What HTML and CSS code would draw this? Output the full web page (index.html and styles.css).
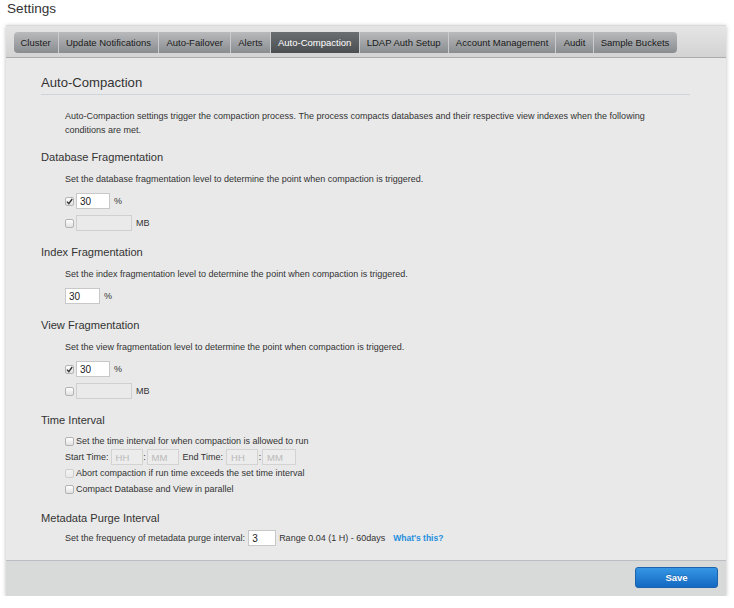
FILE: index.html
```html
<!DOCTYPE html>
<html>
<head>
<meta charset="utf-8">
<link rel="stylesheet" href="styles.css">
</head>
<body>
<h1 class="title">Settings</h1>
<div class="panel">
  <div class="tabbar">
    <div class="tabs">
      <span class="tab">Cluster</span>
      <span class="tab">Update Notifications</span>
      <span class="tab">Auto-Failover</span>
      <span class="tab">Alerts</span>
      <span class="tab active">Auto-Compaction</span>
      <span class="tab">LDAP Auth Setup</span>
      <span class="tab">Account Management</span>
      <span class="tab">Audit</span>
      <span class="tab">Sample Buckets</span>
    </div>
  </div>
  <div class="content">
    <h2 class="main-heading">Auto-Compaction</h2>
    <p class="intro">Auto-Compaction settings trigger the compaction process. The process compacts databases and their respective view indexes when the following conditions are met.</p>

    <div class="section first">
      <h3 class="sec-heading">Database Fragmentation</h3>
      <p class="desc">Set the database fragmentation level to determine the point when compaction is triggered.</p>
      <div class="row"><span class="cb checked"><svg viewBox="0 0 9 9" width="9" height="9"><path d="M2 4.6 L3.8 6.6 L7.2 2" fill="none" stroke="#333" stroke-width="1.4"/></svg></span><span class="field w34">30</span><span class="unit">%</span></div>
      <div class="row gap"><span class="cb"></span><span class="field w56 disabled"></span><span class="unit">MB</span></div>
    </div>

    <div class="section">
      <h3 class="sec-heading">Index Fragmentation</h3>
      <p class="desc">Set the index fragmentation level to determine the point when compaction is triggered.</p>
      <div class="row"><span class="field w35">30</span><span class="unit">%</span></div>
    </div>

    <div class="section">
      <h3 class="sec-heading">View Fragmentation</h3>
      <p class="desc">Set the view fragmentation level to determine the point when compaction is triggered.</p>
      <div class="row"><span class="cb checked"><svg viewBox="0 0 9 9" width="9" height="9"><path d="M2 4.6 L3.8 6.6 L7.2 2" fill="none" stroke="#333" stroke-width="1.4"/></svg></span><span class="field w34">30</span><span class="unit">%</span></div>
      <div class="row gap"><span class="cb"></span><span class="field w56 disabled"></span><span class="unit">MB</span></div>
    </div>

    <div class="section">
      <h3 class="sec-heading">Time Interval</h3>
      <div class="trows">
        <div class="trow"><span class="cb"></span><span class="label">Set the time interval for when compaction is allowed to run</span></div>
        <div class="trow">
          <span class="tlabel">Start Time:</span><span class="field tf">HH</span><span class="colon">:</span><span class="field tf">MM</span>
          <span class="tlabel end">End Time:</span><span class="field tf">HH</span><span class="colon">:</span><span class="field tf wide">MM</span>
        </div>
        <div class="trow"><span class="cb dis"></span><span class="label">Abort compaction if run time exceeds the set time interval</span></div>
        <div class="trow"><span class="cb"></span><span class="label">Compact Database and View in parallel</span></div>
      </div>
    </div>

    <div class="section">
      <h3 class="sec-heading">Metadata Purge Interval</h3>
      <div class="row meta"><span class="mlabel">Set the frequency of metadata purge interval:</span><span class="field w28">3</span><span class="range">Range 0.04 (1 H) - 60days</span><a class="help">What's this?</a></div>
    </div>
  </div>
  <div class="footer">
    <button class="save">Save</button>
  </div>
</div>
</body>
</html>
```
FILE: styles.css
```css
* { box-sizing: border-box; }
html, body { margin: 0; padding: 0; background: #ffffff; }
body {
  font-family: "Liberation Sans", Arial, Helvetica, sans-serif;
  color: #333;
}
.title {
  margin: 0;
  padding: 0 0 0 7px;
  font-size: 13.6px;
  font-weight: normal;
  line-height: 18px;
  color: #333;
}
.panel {
  margin: 7px 0 0 6px;
  width: 720px;
  background: #e9e9e9;
  box-shadow: 0 1px 4px rgba(0,0,0,0.28);
}
.tabbar {
  border-top: 1px solid #d9d9d9;
  border-bottom: 1px solid #a9abad;
  background: linear-gradient(#e5e5e5, #d3d3d3);
  padding: 6px 0 4px 8px;
}
.tabs {
  display: flex;
  height: 21px;
}
.tab {
  display: flex;
  align-items: center;
  padding: 0 7.2px;
  font-size: 9.5px;
  color: #1a1a1a;
  background: linear-gradient(#b8babc, #8a8d90);
  border-left: 1px solid #c9cbcd;
}
.tab:first-child { border-left: none; border-radius: 4px 0 0 4px; padding-left: 6.5px; }
.tab:last-child { border-radius: 0 4px 4px 0; }
.tab.active {
  background: linear-gradient(#6c6f72, #4b4e51);
  color: #fff;
}
.content {
  padding: 16px 36px 14px 35px;
}
.main-heading {
  margin: 0;
  font-size: 13.1px;
  font-weight: normal;
  line-height: 18px;
  padding-bottom: 2px;
  border-bottom: 1px solid #cdd4db;
  color: #333;
}
.intro {
  margin: 14px 25px 0 24px;
  font-size: 9px;
  line-height: 14px;
  color: #333;
}
.section { margin-top: 13px; }
.section.first { margin-top: 12px; }
.sec-heading {
  margin: 0;
  font-size: 11.1px;
  font-weight: normal;
  line-height: 16px;
  color: #333;
}
.desc {
  margin: 7px 0 0 24px;
  font-size: 9px;
  line-height: 14px;
}
.row {
  display: flex;
  align-items: center;
  height: 16px;
  margin: 7px 0 0 24px;
  font-size: 9px;
}
.row.gap { margin-top: 6px; }
.row.meta { margin-top: 4px; }
.cb {
  display: inline-block;
  width: 9px;
  height: 9px;
  border: 1px solid #b3b3b3;
  border-radius: 2px;
  background: linear-gradient(#ffffff, #e2e2e2);
  flex: none;
  position: relative;
}
.cb svg { position: absolute; left: -1px; top: -1px; }
.cb.dis { border-color: #cfcfcf; background: linear-gradient(#f4f4f4, #e8e8e8); }
.field {
  display: inline-flex;
  align-items: center;
  height: 16px;
  border: 1px solid #c8c8c8;
  background: #fff;
  font-size: 10px;
  color: #222;
  padding: 0 3px;
  flex: none;
}
.w34 { width: 34px; margin-left: 2px; }
.w56 { width: 56px; margin-left: 2px; }
.w35 { width: 35px; }
.w28 { width: 28px; margin-left: 3px; }
.field.disabled { background: #eaeaea; border-color: #d0d0d0; }
.unit { margin-left: 4px; font-size: 9px; }
.trows { margin: 5px 0 0 24px; font-size: 9px; }
.trow {
  display: flex;
  align-items: center;
  height: 16px;
}
.trow .label { margin-left: 2px; }
.tlabel { margin-right: 2px; }
.tlabel.end { margin-left: 4px; margin-right: 3px; }
.field.tf {
  width: 32px;
  background: #ececec;
  border-color: #d3d3d3;
  color: #b9b9b9;
  font-size: 9.5px;
  padding-left: 4px;
}
.field.tf.wide { width: 34px; }
.colon { width: 4px; text-align: center; }
.mlabel { white-space: nowrap; }
.range { margin-left: 3px; }
.help {
  margin-left: 8px;
  color: #1e8ede;
  font-weight: bold;
  font-size: 8.5px;
  cursor: pointer;
}
.footer {
  border-top: 1px solid #babdc1;
  background: #d8d9d9;
  padding: 6px 8px 8px 8px;
  display: flex;
  justify-content: flex-end;
}
.save {
  width: 83px;
  height: 21px;
  border: 1px solid #1b63ad;
  border-radius: 3px;
  background: linear-gradient(#3597e4, #1468c2);
  color: #fff;
  font-family: "Liberation Sans", Arial, sans-serif;
  font-weight: bold;
  font-size: 9.5px;
  padding: 0;
  text-shadow: 0 -1px 0 rgba(0,0,0,0.2);
}
```
